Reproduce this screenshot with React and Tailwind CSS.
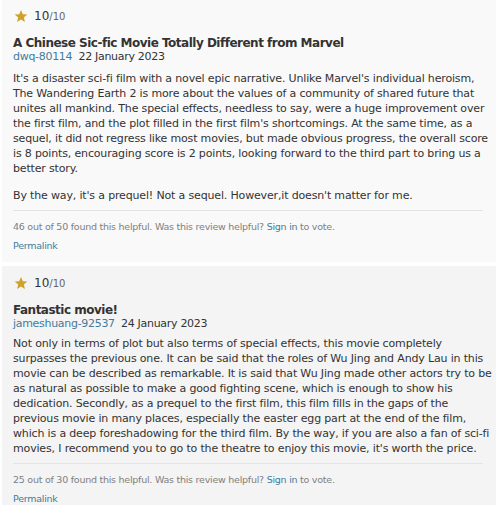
import React from "react";

const Star = () => (
  <svg width="14" height="14" viewBox="0 0 24 24" className="shrink-0">
    <path d="M12 1.8l3.1 7.1 7.7.6-5.9 5.1 1.8 7.6L12 18.2l-6.7 4 1.8-7.6-5.9-5.1 7.7-.6z" fill="#d0a22a" />
  </svg>
);

function Review({ bg, pt, bodyMt, title, author, date, paragraphs, helpful }) {
  return (
    <div className={`${bg} ${pt} px-[11px] pb-[9px]`}>
      <div className="flex items-center gap-[6px] h-[14px] pl-[1px]">
        <Star />
        <span className="text-[#333] text-[12px] leading-none">
          10<span className="text-[10px] text-[#666]">/10</span>
        </span>
      </div>
      <div className="mt-[13px] text-[12px] font-bold text-[#333] leading-[15px] tracking-[-0.5px]">
        {title}
      </div>
      <div className="text-[11px] leading-[12px] tracking-[-0.3px] whitespace-nowrap">
        <span className="text-[#3f7c9c]">{author}</span>{" "}
        <span className="text-[#333] ml-[3px]">{date}</span>
      </div>
      <div className={`${bodyMt} text-[11px] leading-[15px] text-[#333] tracking-[-0.16px]`}>
        {paragraphs.map((p, i) => (
          <p key={i} className={i > 0 ? "mt-[12px]" : ""}>
            {p.map((line, j) => (
              <span key={j} className="block whitespace-nowrap">
                {line}
              </span>
            ))}
          </p>
        ))}
      </div>
      <div className="mt-[7px] border-t border-[#e4e4e4] mr-[2px]" />
      <div className="mt-[9px] text-[9.5px] leading-[14px] text-[#808080] tracking-[-0.25px] whitespace-nowrap">
        {helpful} found this helpful. Was this review helpful?{" "}
        <span className="text-[#3f7c9c]">Sign in</span> to vote.
      </div>
      <div className="mt-[5px] text-[9.5px] leading-[14px] tracking-[-0.25px] text-[#3f7c9c]">Permalink</div>
    </div>
  );
}

export default function App() {
  return (
    <div
      className="w-[500px] h-[505px] bg-white overflow-hidden pl-[2px] pr-[4px] flex flex-col gap-[4px]"
      style={{ fontFamily: "'DejaVu Sans', Verdana, sans-serif" }}
    >
      <Review
        bg="bg-[#f9f9f9]"
        pt="pt-[9px]"
        bodyMt="mt-[8px]"
        title="A Chinese Sic-fic Movie Totally Different from Marvel"
        author="dwq-80114"
        date="22 January 2023"
        paragraphs={[
          [
            "It's a disaster sci-fi film with a novel epic narrative. Unlike Marvel's individual heroism,",
            "The Wandering Earth 2 is more about the values of a community of shared future that",
            "unites all mankind. The special effects, needless to say, were a huge improvement over",
            "the first film, and the plot filled in the first film's shortcomings. At the same time, as a",
            "sequel, it did not regress like most movies, but made obvious progress, the overall score",
            "is 8 points, encouraging score is 2 points, looking forward to the third part to bring us a",
            "better story.",
          ],
          ["By the way, it's a prequel! Not a sequel. However,it doesn't matter for me."],
        ]}
        helpful="46 out of 50"
      />
      <Review
        bg="bg-[#f4f4f4]"
        pt="pt-[10px]"
        bodyMt="mt-[6px]"
        title="Fantastic movie!"
        author="jameshuang-92537"
        date="24 January 2023"
        paragraphs={[
          [
            "Not only in terms of plot but also terms of special effects, this movie completely",
            "surpasses the previous one. It can be said that the roles of Wu Jing and Andy Lau in this",
            "movie can be described as remarkable. It is said that Wu Jing made other actors try to be",
            "as natural as possible to make a good fighting scene, which is enough to show his",
            "dedication. Secondly, as a prequel to the first film, this film fills in the gaps of the",
            "previous movie in many places, especially the easter egg part at the end of the film,",
            "which is a deep foreshadowing for the third film. By the way, if you are also a fan of sci-fi",
            "movies, I recommend you to go to the theatre to enjoy this movie, it's worth the price.",
          ],
        ]}
        helpful="25 out of 30"
      />
    </div>
  );
}
